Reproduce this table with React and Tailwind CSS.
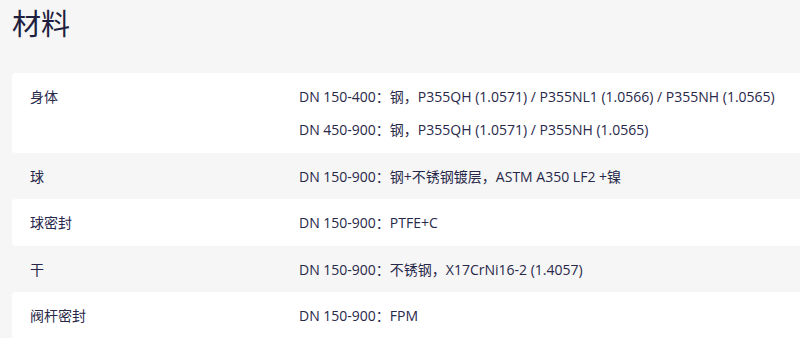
const rows = [
  {
    label: "身体",
    values: [
      "DN 150-400：钢，P355QH (1.0571) / P355NL1 (1.0566) / P355NH (1.0565)",
      "DN 450-900：钢，P355QH (1.0571) / P355NH (1.0565)",
    ],
  },
  { label: "球", values: ["DN 150-900：钢+不锈钢镀层，ASTM A350 LF2 +镍"] },
  { label: "球密封", values: ["DN 150-900：PTFE+C"] },
  { label: "干", values: ["DN 150-900：不锈钢，X17CrNi16-2 (1.4057)"] },
  { label: "阀杆密封", values: ["DN 150-900：FPM"] },
];

export default function App() {
  return (
    <div
      className="min-h-screen w-[800px] h-[338px] overflow-hidden bg-[#f6f6f6] text-[#28284a]"
      style={{ fontFamily: '"Open Sans", "Noto Sans CJK SC", sans-serif' }}
    >
      <h1 className="pl-[12px] pt-[5px] text-[29px] leading-[38px] font-normal text-[#1f1f3f]">
        材料
      </h1>

      <div className="mt-[30px] ml-[12px] w-[800px]">
        {rows.map((row, i) => (
          <div
            key={row.label}
            className={`flex pt-[13px] pb-[11px] pl-[18px] text-[14px] leading-[22.5px] rounded-[4px] ${
              i % 2 === 0 ? "bg-white" : "bg-transparent"
            }`}
          >
            <div className="w-[269px] shrink-0">{row.label}</div>
            <div className="flex flex-col gap-[10.5px]">
              {row.values.map((v) => (
                <div key={v}>{v}</div>
              ))}
            </div>
          </div>
        ))}
      </div>
    </div>
  );
}
